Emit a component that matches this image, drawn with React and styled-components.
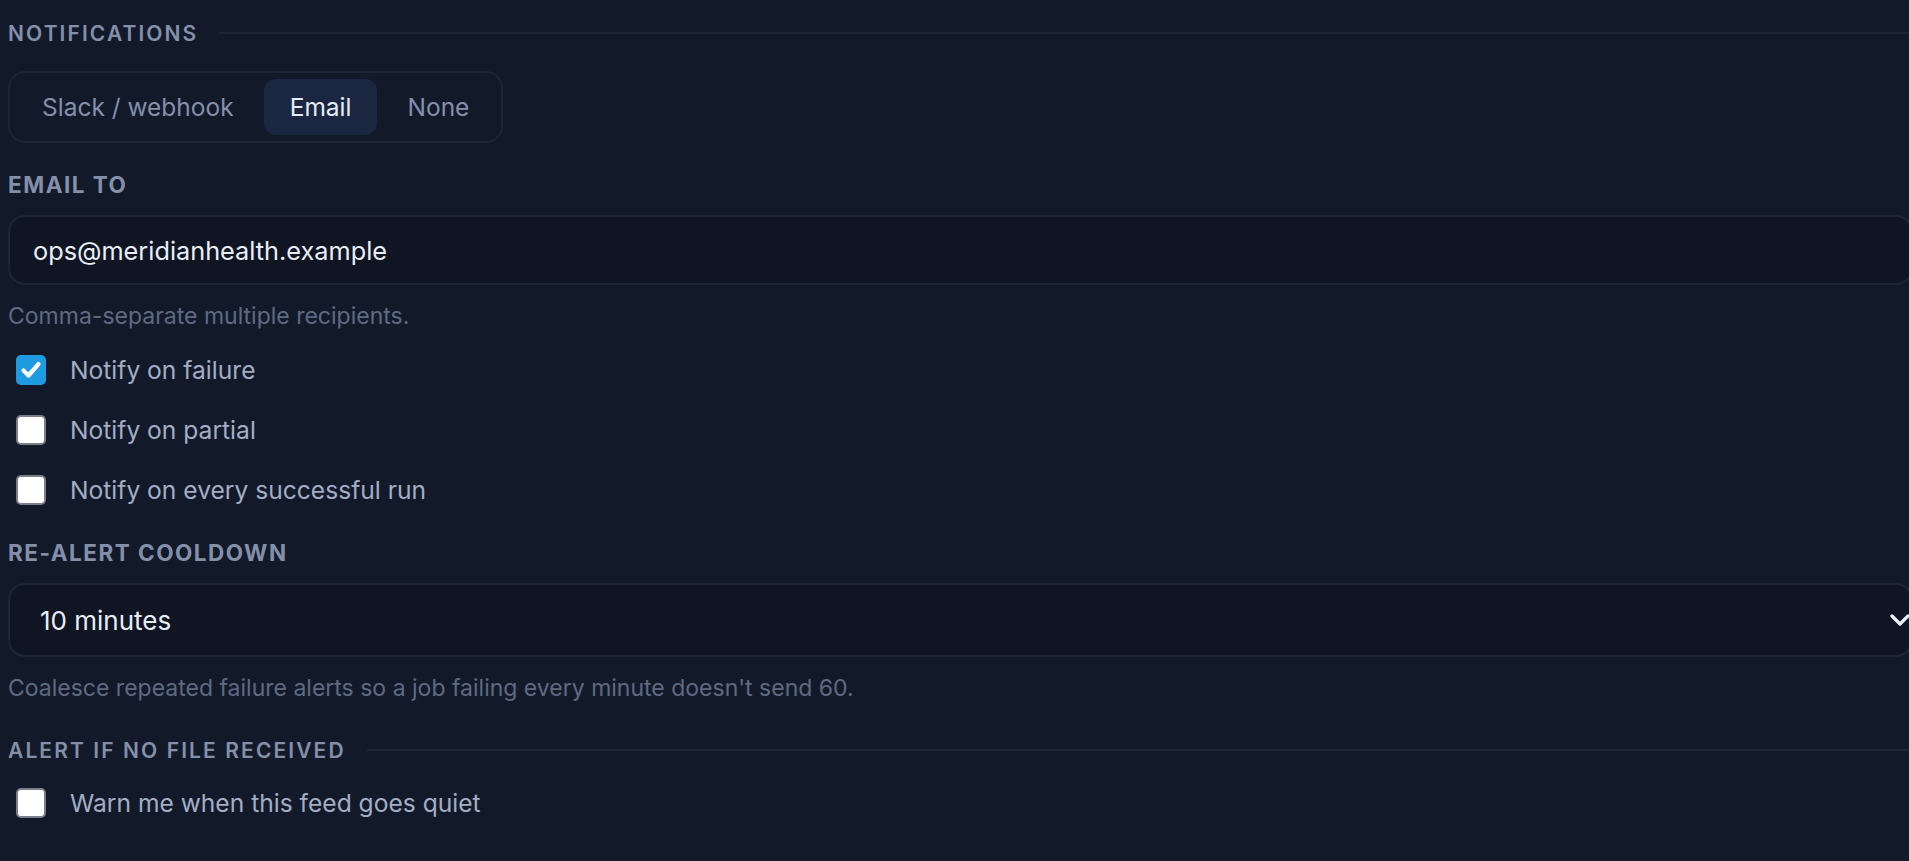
import styled, { createGlobalStyle } from "styled-components";
import { useState } from "react";

const GlobalStyle = createGlobalStyle`
  html, body {
    margin: 0;
    background: #121a2a;
    overflow: hidden;
  }
  body {
    font-family: Inter, "Noto Sans", sans-serif;
  }
`;

const Page = styled.div`
  width: 1905px;
  padding: 14px 0 0 8px;
  display: flex;
  flex-direction: column;
`;

const SectionHead = styled.div`
  display: flex;
  align-items: center;
  gap: 21px;
  height: 38px;
  margin-top: ${(p) => p.$top || 0}px;
  color: #8490aa;
  font-size: 21px;
  font-weight: 600;
  letter-spacing: 2.1px;
  text-transform: uppercase;

  &::after {
    content: "";
    flex: 1;
    height: 2px;
    background: #1d2636;
  }
`;

const Segmented = styled.div`
  display: inline-flex;
  align-self: flex-start;
  gap: 4px;
  margin-top: 19px;
  padding: 6px;
  height: 72px;
  box-sizing: border-box;
  border: 2px solid #1d2636;
  border-radius: 17px;
`;

const SegButton = styled.button`
  border: none;
  border-radius: 12px;
  padding: 0 26px;
  height: 100%;
  background: ${(p) => (p.$active ? "#1b2640" : "transparent")};
  color: ${(p) => (p.$active ? "#e6ecf7" : "#8490aa")};
  font-family: inherit;
  font-size: 24.5px;
  cursor: pointer;
`;

const FieldLabel = styled.div`
  margin-top: ${(p) => p.$top || 0}px;
  color: #8490aa;
  font-size: 22.5px;
  font-weight: 700;
  letter-spacing: 1.5px;
  text-transform: uppercase;
  line-height: 28px;
`;

const TextInput = styled.input`
  margin-top: 16px;
  height: 70px;
  box-sizing: border-box;
  padding: 0 23px;
  background: #0f1523;
  border: 2px solid #1d2636;
  border-radius: 17px;
  color: #e9eef8;
  font-family: inherit;
  font-size: 25.3px;
  outline: none;
`;

const Help = styled.div`
  margin-top: ${(p) => p.$top || 0}px;
  color: #5f6a82;
  font-size: 23px;
  line-height: 28px;
`;

const CheckRow = styled.label`
  display: flex;
  align-items: center;
  gap: 24px;
  height: 30px;
  margin-top: ${(p) => p.$top || 30}px;
  padding-left: 8px;
  color: #a3aec4;
  font-size: 24.6px;
  cursor: pointer;
`;

const Box = styled.span`
  width: 30px;
  height: 30px;
  box-sizing: border-box;
  border-radius: 5px;
  display: flex;
  align-items: center;
  justify-content: center;
  background: ${(p) => (p.$checked ? "#1e9be0" : "#ffffff")};
  border: ${(p) => (p.$checked ? "none" : "2px solid #7a7f88")};
`;

const HiddenCheck = styled.input`
  display: none;
`;

const SelectWrap = styled.div`
  position: relative;
  margin-top: 16px;
`;

const Select = styled.select`
  width: 100%;
  height: 74px;
  box-sizing: border-box;
  padding: 0 30px;
  appearance: none;
  background: #0f1523;
  border: 2px solid #1d2636;
  border-radius: 17px;
  color: #e9eef8;
  font-family: inherit;
  font-size: 26px;
  outline: none;
`;

const Chevron = styled.svg`
  position: absolute;
  right: 2px;
  top: 50%;
  transform: translateY(-50%);
  pointer-events: none;
`;

function Check({ label, checked, onToggle, top }) {
  return (
    <CheckRow $top={top}>
      <HiddenCheck type="checkbox" checked={checked} onChange={onToggle} />
      <Box $checked={checked}>
        {checked && (
          <svg width="24" height="24" viewBox="0 0 24 24">
            <path
              d="M4.5 12.5l5 5L19.5 6"
              fill="none"
              stroke="#ffffff"
              strokeWidth="4.2"
              strokeLinecap="round"
              strokeLinejoin="round"
            />
          </svg>
        )}
      </Box>
      {label}
    </CheckRow>
  );
}

export default function App() {
  const [channel, setChannel] = useState("email");
  const [checks, setChecks] = useState({
    failure: true,
    partial: false,
    success: false,
    quiet: false,
  });

  const toggle = (key) => () => setChecks({ ...checks, [key]: !checks[key] });

  return (
    <>
      <GlobalStyle />
      <Page>
        <SectionHead>Notifications</SectionHead>
        <Segmented>
          <SegButton $active={channel === "slack"} onClick={() => setChannel("slack")}>
            Slack / webhook
          </SegButton>
          <SegButton $active={channel === "email"} onClick={() => setChannel("email")}>
            Email
          </SegButton>
          <SegButton $active={channel === "none"} onClick={() => setChannel("none")}>
            None
          </SegButton>
        </Segmented>

        <FieldLabel $top={28}>Email to</FieldLabel>
        <TextInput defaultValue="ops@meridianhealth.example" />
        <Help $top={17}>Comma-separate multiple recipients.</Help>

        <Check label="Notify on failure" checked={checks.failure} onToggle={toggle("failure")} top={25} />
        <Check label="Notify on partial" checked={checks.partial} onToggle={toggle("partial")} />
        <Check label="Notify on every successful run" checked={checks.success} onToggle={toggle("success")} />

        <FieldLabel $top={34}>Re-alert cooldown</FieldLabel>
        <SelectWrap>
          <Select defaultValue="10">
            <option value="5">5 minutes</option>
            <option value="10">10 minutes</option>
            <option value="30">30 minutes</option>
            <option value="60">1 hour</option>
          </Select>
          <Chevron width="22" height="16" viewBox="0 0 22 16">
            <path
              d="M3 4l8 8 8-8"
              fill="none"
              stroke="#eef2fa"
              strokeWidth="3.2"
              strokeLinecap="round"
              strokeLinejoin="round"
            />
          </Chevron>
        </SelectWrap>
        <Help $top={17}>
          Coalesce repeated failure alerts so a job failing every minute doesn't send 60.
        </Help>

        <SectionHead $top={29}>Alert if no file received</SectionHead>
        <Check label="Warn me when this feed goes quiet" checked={checks.quiet} onToggle={toggle("quiet")} top={19} />
      </Page>
    </>
  );
}
